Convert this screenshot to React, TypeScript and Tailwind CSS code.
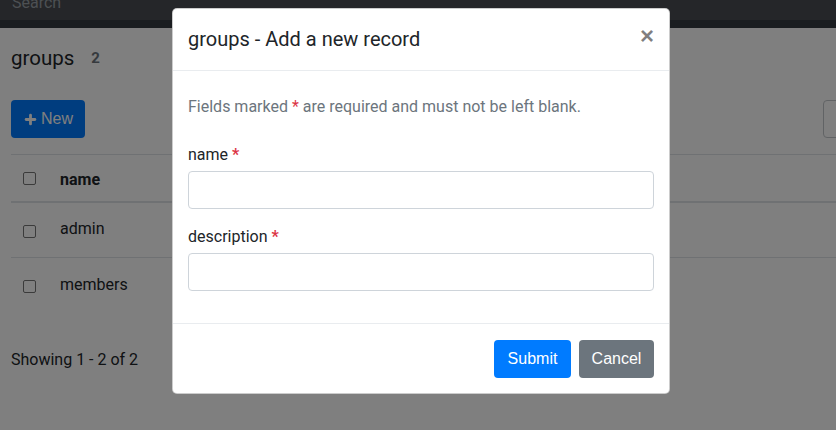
import { Plus } from "lucide-react";

function Check() {
  return <span className="block w-[13px] h-[13px] rounded-[2px] border border-[#767676] bg-white" />;
}

function Page() {
  return (
    <div className="w-[872px]">
      <div className="h-[28px] bg-[#343a40]">
        <div className="h-[20px] bg-[#4a4d52] px-3 overflow-hidden">
          <div className="-mt-[9px] text-[16px] leading-[24px] text-[#9aa0a6]">Search</div>
        </div>
      </div>
      <div className="px-[11px]">
        <div className="mt-[15px] flex items-center h-[30px]">
          <span className="text-[20.5px] text-[#212529]">groups</span>
          <span className="ml-[17px] text-[15px] font-bold text-[#6c757d]">2</span>
        </div>
        <div className="mt-[27px] flex justify-between">
          <button className="h-[38px] w-[74px] rounded-[4px] bg-[#007bff] text-white text-[16px] flex items-center justify-center gap-[3px] font-['Liberation_Sans',sans-serif]">
            <Plus size={15} strokeWidth={4.5} />
            New
          </button>
          <div className="h-[38px] w-[38px] rounded-[4px] border border-[#c3c7cb] bg-white" />
        </div>
        <div className="mt-[16px] border-t border-[#dee2e6]">
          <div className="flex items-center h-[48px] border-b-2 border-[#dee2e6]">
            <div className="w-[49px] pl-[12px]"><Check /></div>
            <span className="font-bold text-[16px] text-[#212529] mt-[4px]">name</span>
          </div>
          <div className="flex items-center h-[55px] border-b border-[#dee2e6]">
            <div className="w-[49px] pl-[12px] mt-[2px]"><Check /></div>
            <span className="text-[16px] text-[#212529] -mt-[2px]">admin</span>
          </div>
          <div className="flex items-center h-[55px]">
            <div className="w-[49px] pl-[12px] mt-[2px]"><Check /></div>
            <span className="text-[16px] text-[#212529] -mt-[2px]">members</span>
          </div>
        </div>
        <div className="mt-[35px] text-[16px] leading-[24px] text-[#212529]">Showing 1 - 2 of 2</div>
      </div>
    </div>
  );
}

function Field({ label }: { label: string }) {
  return (
    <div className="mb-[16px]">
      <label className="block mb-[4px] text-[16px] leading-[24px] text-[#212529]">
        {label} <span className="text-[#dc3545] font-bold">*</span>
      </label>
      <div className="h-[38px] rounded-[4px] border border-[#ced4da] bg-white" />
    </div>
  );
}

export default function App() {
  return (
    <div className="relative w-[836px] h-[430px] overflow-hidden bg-white font-['Roboto',sans-serif]">
      <Page />
      <div className="absolute inset-0 bg-black/50" />
      <div className="absolute left-[172px] top-[8px] w-[498px] rounded-[5px] border border-black/20 bg-white">
        <div className="flex items-start justify-between pl-[15px] pr-[16px] pt-[15px] pb-[16px] border-b border-[#e9ecef]">
          <h5 className="text-[20px] leading-[30px] text-[#212529]">groups - Add a new record</h5>
          <span className="text-[24px] leading-[24px] font-bold text-black/50 -mr-[1px] font-['Liberation_Sans',sans-serif]">×</span>
        </div>
        <div className="px-[15px] pt-[24px] pb-[16px]">
          <p className="mb-[24px] text-[16px] leading-[24px] text-[#6c757d]">
            Fields marked <span className="text-[#dc3545]">*</span> are required and must not be left blank.
          </p>
          <Field label="name" />
          <Field label="description" />
        </div>
        <div className="flex justify-end gap-[8px] px-[15px] pt-[16px] pb-[15px] border-t border-[#e9ecef] font-['Liberation_Sans',sans-serif]">
          <button className="h-[38px] w-[77px] rounded-[4px] bg-[#007bff] text-white text-[16px]">Submit</button>
          <button className="h-[38px] w-[75px] rounded-[4px] bg-[#6c757d] text-white text-[16px]">Cancel</button>
        </div>
      </div>
    </div>
  );
}
